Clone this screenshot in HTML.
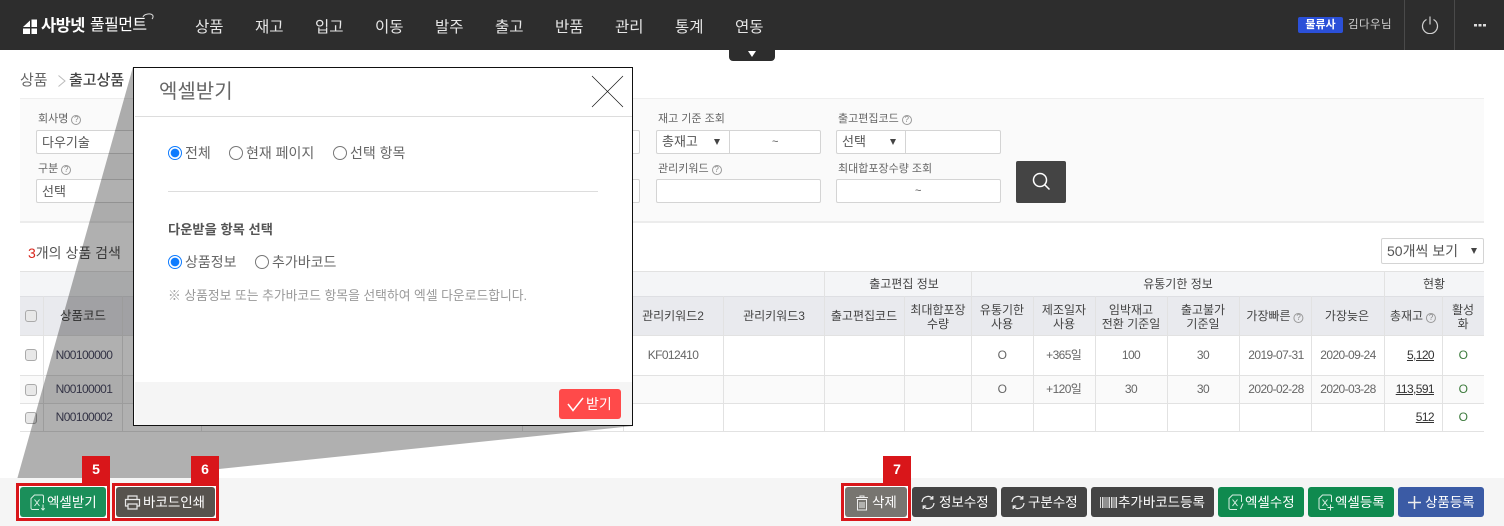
<!DOCTYPE html>
<html lang="ko"><head><meta charset="utf-8"><title>엑셀받기</title>
<style>
*{box-sizing:border-box}
html,body{margin:0;padding:0;background:#fff}
body{width:1504px;height:526px;position:relative;overflow:hidden;font-family:"Liberation Sans","Noto Sans CJK KR",sans-serif;color:#555;font-size:12px}
div,span.a,svg.a{position:absolute}
.t{white-space:nowrap;line-height:16px}
.c{white-space:nowrap;text-align:center;line-height:14px;transform:translateX(-50%)}
.m{top:18px;color:#e6e6e6;font-size:15.500px;line-height:20px;white-space:nowrap}
.lb{font-size:11px;color:#666;line-height:14px;white-space:nowrap}
.in{background:#fff;border:1px solid #d4d4d4;border-radius:2px;height:24px}
.q{display:inline-block;width:10px;height:10px;border:1px solid #999;border-radius:50%;font-size:8px;line-height:8px;text-align:center;color:#888;margin-left:3px;vertical-align:0}
.hl{left:20px;width:1464px;height:1px;background:#e2e2e2}
.vl{width:1px;background:#e2e2e2}
.h{font-size:12px;color:#444}
.d{font-size:12px;color:#666;letter-spacing:-.6px}
.k{font-size:12px;letter-spacing:0}
.r{width:14px;height:14px;border-radius:50%;border:1px solid #777;background:#fff}
.r.on{border:1.500px solid #0d7bff;background:radial-gradient(circle,#0d7bff 0 4px,#fff 4.600px)}
.cb{width:12px;height:12px;background:#e8e8e8;border:1px solid #aaa;border-radius:3px;left:25px}
.b{top:487px;height:30px;border-radius:3px;color:#fff;font-size:13.500px;line-height:30px;white-space:nowrap}
.b span{position:absolute;top:0;line-height:31px}
.red{border:3px solid #d9161a;box-shadow:inset 0 0 0 1px #fff;top:483px;height:38px}
.bd{top:456px;width:28px;height:28px;background:#d9161a;color:#fff;font-weight:700;font-size:14px;line-height:27px;text-align:center}
.rt{font-size:14px;color:#666}
</style></head><body>

<!-- top bar -->
<div style="left:0;top:0;width:1504px;height:50px;background:#2d2d2d"></div>
<svg class="a" style="left:22px;top:18px" width="20" height="17" viewBox="0 0 20 17"><path d="M1 9 8 2.500V9zM9.500 1.500H15V9H9.500zM1 10.500h7V16H1zM9.500 10.500H15V16H9.500z" fill="#fff"/></svg>
<div class="t" style="left:41px;top:15px;color:#fff;font-size:16.500px;font-weight:700;line-height:22px;letter-spacing:-.6px">사방넷</div>
<div class="t" style="left:90px;top:15px;color:#fff;font-size:16px;line-height:22px;letter-spacing:-.6px">풀필먼트</div>
<svg class="a" style="left:142px;top:13px" width="12" height="9" viewBox="0 0 12 9"><path d="M1 4C2 1 8 0 10.500 2 11.500 3 11 5 10 6" fill="none" stroke="#ddd"/></svg>
<div class="m" style="left:195px">상품</div><div class="m" style="left:255px">재고</div><div class="m" style="left:315px">입고</div><div class="m" style="left:375px">이동</div><div class="m" style="left:435px">발주</div><div class="m" style="left:495px">출고</div><div class="m" style="left:555px">반품</div><div class="m" style="left:615px">관리</div><div class="m" style="left:675px">통계</div><div class="m" style="left:735px">연동</div>
<div style="left:729px;top:50px;width:46px;height:11px;background:#2d2d2d;border-radius:0 0 4px 4px"></div>
<div style="left:748px;top:51px;width:0;height:0;border-left:4.500px solid transparent;border-right:4.500px solid transparent;border-top:6px solid #fff"></div>
<div style="left:1298px;top:17px;width:45px;height:16px;background:#2b50d8;border-radius:2px;color:#fff;font-size:11px;line-height:16px;text-align:center;font-weight:700">물류사</div>
<div class="t" style="left:1348px;top:17px;color:#cfcfcf;font-size:11.500px;letter-spacing:.4px">김다우님</div>
<div class="vl" style="left:1404px;top:0;height:50px;background:#4a4a4a"></div>
<div class="vl" style="left:1454px;top:0;height:50px;background:#4a4a4a"></div>
<svg class="a" style="left:1421px;top:16px" width="18" height="18" viewBox="0 0 18 18"><path d="M5.500 3.500a7.500 7.500 0 1 0 7 0M9 .5v8" fill="none" stroke="#cfcfcf" stroke-width="1.200"/></svg>
<svg class="a" style="left:1473px;top:23px" width="14" height="4" viewBox="0 0 14 4"><path d="M1 1h3v2.500H1zM5.500 1h3v2.500h-3zM10 1h3v2.500h-3z" fill="#ddd"/></svg>

<!-- breadcrumb -->
<div class="t" style="left:20px;top:72px;font-size:15px;line-height:18px;color:#666">상품</div>
<svg class="a" style="left:57px;top:74px" width="10" height="14" viewBox="0 0 10 14"><path d="M1.500 1.500 8 7l-6.500 5.500" fill="none" stroke="#bbb"/></svg>
<div class="t" style="left:69px;top:72px;font-size:15px;line-height:18px;color:#444;font-weight:500">출고상품</div>

<!-- filter -->
<div style="left:20px;top:98px;width:1464px;height:125px;background:#fafafa;border-top:1px solid #eee;border-bottom:2px solid #ececec"></div>
<div class="lb" style="left:38px;top:112px">회사명<span class="q">?</span></div>
<div class="in" style="left:36px;top:130px;width:110px;padding:4px 5px;font-size:13px;color:#555;line-height:16px">다우기술</div>
<div class="lb" style="left:38px;top:162px">구분<span class="q">?</span></div>
<div class="in" style="left:36px;top:179px;width:110px;padding:4px 5px;font-size:13px;color:#555;line-height:16px">선택</div>
<div class="in" style="left:600px;top:130px;width:40px"></div>
<div class="in" style="left:600px;top:179px;width:40px"></div>

<div class="lb" style="left:658px;top:112px">재고 기준 조회</div>
<div class="in" style="left:656px;top:130px;width:165px"></div>
<div class="vl" style="left:729px;top:130px;height:24px;background:#d4d4d4"></div>
<div class="t" style="left:662px;top:134px;font-size:13px;color:#555">총재고</div>
<div style="left:714px;top:139px;border-left:3.500px solid transparent;border-right:3.500px solid transparent;border-top:6px solid #444"></div>
<div class="t" style="left:772px;top:134px;font-size:11px">~</div>

<div class="lb" style="left:838px;top:112px">출고편집코드<span class="q">?</span></div>
<div class="in" style="left:836px;top:130px;width:165px"></div>
<div class="vl" style="left:905px;top:130px;height:24px;background:#d4d4d4"></div>
<div class="t" style="left:842px;top:134px;font-size:13px;color:#555">선택</div>
<div style="left:890px;top:139px;border-left:3.500px solid transparent;border-right:3.500px solid transparent;border-top:6px solid #444"></div>

<div class="lb" style="left:658px;top:162px">관리키워드<span class="q">?</span></div>
<div class="in" style="left:656px;top:179px;width:165px"></div>
<div class="lb" style="left:838px;top:162px">최대합포장수량 조회</div>
<div class="in" style="left:836px;top:179px;width:165px"></div>
<div class="t" style="left:915px;top:183px;font-size:11px">~</div>
<div style="left:1016px;top:161px;width:50px;height:42px;background:#444;border-radius:2px"></div>
<svg class="a" style="left:1032px;top:172px" width="19" height="19" viewBox="0 0 19 19"><circle cx="8" cy="8" r="6.500" fill="none" stroke="#fff" stroke-width="1.500"/><path d="m12.800 12.800 4.700 4.700" stroke="#fff" stroke-width="1.500"/></svg>

<!-- search result -->
<div class="t" style="left:28px;top:245px;font-size:14px;color:#555"><span style="color:#d9261c">3</span>개의 상품 검색</div>
<div class="in" style="left:1381px;top:238px;width:103px;height:26px;padding:4px 5px;font-size:14px;color:#555;line-height:16px">50개씩 보기</div>
<div style="left:1471px;top:248px;border-left:3px solid transparent;border-right:3px solid transparent;border-top:6px solid #444"></div>

<!-- table -->
<div style="left:20px;top:271px;width:1464px;height:25px;background:#f4f5f7"></div>
<div style="left:20px;top:296px;width:1464px;height:39px;background:#e9eaee"></div>
<div style="left:20px;top:375px;width:1464px;height:28px;background:#fafafa"></div>
<div class="hl" style="top:271px"></div><div class="hl" style="top:296px;background:#dedfe3"></div><div class="hl" style="top:335px"></div><div class="hl" style="top:375px"></div><div class="hl" style="top:403px"></div><div class="hl" style="top:431px"></div>
<div class="vl" style="left:43px;top:296px;height:135px"></div>
<div class="vl" style="left:122px;top:296px;height:135px"></div>
<div class="vl" style="left:201px;top:296px;height:135px"></div>
<div class="vl" style="left:522px;top:296px;height:135px"></div>
<div class="vl" style="left:623px;top:296px;height:135px"></div>
<div class="vl" style="left:723px;top:296px;height:135px"></div>
<div class="vl" style="left:824px;top:271px;height:160px"></div>
<div class="vl" style="left:904px;top:296px;height:135px"></div>
<div class="vl" style="left:971px;top:271px;height:160px"></div>
<div class="vl" style="left:1033px;top:296px;height:135px"></div>
<div class="vl" style="left:1095px;top:296px;height:135px"></div>
<div class="vl" style="left:1167px;top:296px;height:135px"></div>
<div class="vl" style="left:1239px;top:296px;height:135px"></div>
<div class="vl" style="left:1311px;top:296px;height:135px"></div>
<div class="vl" style="left:1384px;top:271px;height:160px"></div>
<div class="vl" style="left:1442px;top:296px;height:135px"></div>

<div class="c h" style="left:904px;top:277px">출고편집 정보</div>
<div class="c h" style="left:1178px;top:277px">유통기한 정보</div>
<div class="c h" style="left:1434px;top:277px">현황</div>

<div class="cb" style="top:310px"></div>
<div class="c h" style="left:83px;top:309px;font-size:12.500px">상품코드</div>
<div class="c h" style="left:673px;top:309px">관리키워드2</div>
<div class="c h" style="left:774px;top:309px">관리키워드3</div>
<div class="c h" style="left:864px;top:309px">출고편집코드</div>
<div class="c h" style="left:938px;top:303px">최대합포장<br>수량</div>
<div class="c h" style="left:1002px;top:303px">유통기한<br>사용</div>
<div class="c h" style="left:1064px;top:303px">제조일자<br>사용</div>
<div class="c h" style="left:1131px;top:303px">임박재고<br>전환 기준일</div>
<div class="c h" style="left:1203px;top:303px">출고불가<br>기준일</div>
<div class="c h" style="left:1275px;top:309px">가장빠른<span class="q">?</span></div>
<div class="c h" style="left:1347px;top:309px">가장늦은</div>
<div class="c h" style="left:1413px;top:309px">총재고<span class="q">?</span></div>
<div class="c h" style="left:1463px;top:303px">활성<br>화</div>

<div class="cb" style="top:349px"></div>
<div class="c d" style="left:84px;top:348px;color:#4c4c66">N00100000</div>
<div class="c d" style="left:673px;top:348px">KF012410</div>
<div class="c d" style="left:1002px;top:348px">O</div>
<div class="c d" style="left:1064px;top:348px">+365<span class="k">일</span></div>
<div class="c d" style="left:1131px;top:348px">100</div>
<div class="c d" style="left:1203px;top:348px">30</div>
<div class="c d" style="left:1276px;top:348px">2019-07-31</div>
<div class="c d" style="left:1348px;top:348px">2020-09-24</div>
<div class="t d" style="right:70px;top:347px;color:#333;text-decoration:underline">5,120</div>
<div class="c d" style="left:1463px;top:348px;color:#3c7a3c">O</div>

<div class="cb" style="top:384px"></div>
<div class="c d" style="left:84px;top:382px;color:#4c4c66">N00100001</div>
<div class="c d" style="left:1002px;top:382px">O</div>
<div class="c d" style="left:1064px;top:382px">+120<span class="k">일</span></div>
<div class="c d" style="left:1131px;top:382px">30</div>
<div class="c d" style="left:1203px;top:382px">30</div>
<div class="c d" style="left:1276px;top:382px">2020-02-28</div>
<div class="c d" style="left:1348px;top:382px">2020-03-28</div>
<div class="t d" style="right:70px;top:381px;color:#333;text-decoration:underline">113,591</div>
<div class="c d" style="left:1463px;top:382px;color:#3c7a3c">O</div>

<div class="cb" style="top:412px"></div>
<div class="c d" style="left:84px;top:410px;color:#4c4c66">N00100002</div>
<div class="t d" style="right:70px;top:409px;color:#333;text-decoration:underline">512</div>
<div class="c d" style="left:1463px;top:410px;color:#3c7a3c">O</div>

<!-- annotation wedge -->
<svg class="a" style="left:0;top:0" width="1504" height="526" viewBox="0 0 1504 526"><polygon points="133,67 16,483 219,483 219,469 633,426" fill="#000" fill-opacity=".31"/></svg>

<!-- footer -->
<div style="left:0;top:478px;width:1504px;height:48px;background:#f5f5f5"></div>

<div class="b" style="left:20px;width:86px;background:#1b8f5a"><span style="left:27px">엑셀받기</span></div>
<svg class="a" style="left:30px;top:494px" width="16" height="17" viewBox="0 0 16 17"><path d="M11 1H4.500L1 4.500v9.500a1.500 1.500 0 0 0 1.500 1.500H9M11 1h1A1.500 1.500 0 0 1 13.500 2.500V9M4.500 5.500l5 6.500M9.500 5.500l-5 6.500M13 10.500v5.500M11.300 14.300 13 16l1.700-1.700" fill="none" stroke="#d8efe3"/></svg>
<div class="b" style="left:116px;width:99px;background:#57534e"><span style="left:27px">바코드인쇄</span></div>
<svg class="a" style="left:124px;top:495px" width="17" height="15" viewBox="0 0 17 15"><path d="M4 4V1h9v3M4 11H1.500V4.500h14V11H13M4 9h9v5H4z" fill="none" stroke="#e8e8e8" stroke-width="1.200"/></svg>
<div class="red" style="left:16px;width:94px"></div>
<div class="red" style="left:112px;width:107px"></div>
<div class="bd" style="left:82px">5</div>
<div class="bd" style="left:191px">6</div>

<div class="b" style="left:845px;width:62px;background:#777570"><span style="left:27px">삭제</span></div>
<svg class="a" style="left:855px;top:495px" width="14" height="16" viewBox="0 0 14 16"><path d="M1 2.500h12M5 2.500V1h4v1.500M2.500 4.500h9V15h-9zM5 7v6M7 7v6M9 7v6" fill="none" stroke="#eee"/></svg>
<div class="red" style="left:841px;width:70px"></div>
<div class="bd" style="left:883px">7</div>

<div class="b" style="left:912px;width:85px;background:#444"><span style="left:27px">정보수정</span></div>
<svg class="a" style="left:921px;top:495px" width="14" height="15" viewBox="0 0 14 15"><path d="M1 7a6 6 0 0 1 10.500-3.500M13 8a6 6 0 0 1-10.500 3.500M11.800 1v3h-3M2.200 14v-3h3" fill="none" stroke="#eee" stroke-width="1.200"/></svg>
<div class="b" style="left:1001px;width:86px;background:#444"><span style="left:27px">구분수정</span></div>
<svg class="a" style="left:1011px;top:495px" width="14" height="15" viewBox="0 0 14 15"><path d="M1 7a6 6 0 0 1 10.500-3.500M13 8a6 6 0 0 1-10.500 3.500M11.800 1v3h-3M2.200 14v-3h3" fill="none" stroke="#eee" stroke-width="1.200"/></svg>
<div class="b" style="left:1091px;width:123px;background:#444"><span style="left:27px">추가바코드등록</span></div>
<svg class="a" style="left:1100px;top:497px" width="17" height="11" viewBox="0 0 17 11"><path d="M.5 0v11M2.500 0v11M4 0v11M6 0v11M8 0v11M9.500 0v11M11.500 0v11M13 0v11M15 0v11M16.500 0v11" stroke="#ddd"/></svg>
<div class="b" style="left:1218px;width:86px;background:#0f8a4f"><span style="left:27px">엑셀수정</span></div>
<svg class="a" style="left:1228px;top:494px" width="16" height="17" viewBox="0 0 16 17"><path d="M11 1H4.500L1 4.500v9.500a1.500 1.500 0 0 0 1.500 1.500H9M11 1h1A1.500 1.500 0 0 1 13.500 2.500V8M4.500 5.500l5 6.500M9.500 5.500l-5 6.500M15 9.500 12.500 15" fill="none" stroke="#d8efe3"/></svg>
<div class="b" style="left:1308px;width:86px;background:#0f8a4f"><span style="left:27px">엑셀등록</span></div>
<svg class="a" style="left:1318px;top:494px" width="16" height="17" viewBox="0 0 16 17"><path d="M11 1H4.500L1 4.500v9.500a1.500 1.500 0 0 0 1.500 1.500H8M11 1h1A1.500 1.500 0 0 1 13.500 2.500V8M4.500 5.500l5 6.500M9.500 5.500l-5 6.500M12.500 10.500v6M9.500 13.500h6" fill="none" stroke="#d8efe3"/></svg>
<div class="b" style="left:1398px;width:86px;background:#3b5ba5"><span style="left:27px">상품등록</span></div>
<svg class="a" style="left:1408px;top:496px" width="13" height="13" viewBox="0 0 13 13"><path d="M6.500 0v13M0 6.500h13" stroke="#eee" stroke-width="1.500"/></svg>

<!-- modal -->
<div style="left:133px;top:67px;width:500px;height:359px;background:#fff;border:1.500px solid #111"></div>
<div class="t" style="left:159px;top:79px;font-size:20px;line-height:26px;color:#666">엑셀받기</div>
<div style="left:135px;top:116px;width:497px;height:1px;background:#ddd"></div>
<svg class="a" style="left:591px;top:75px" width="33" height="33" viewBox="0 0 33 33"><path d="M1 1l31 31M32 1 1 32" stroke="#111" stroke-width=".7" fill="none"/></svg>

<div class="r on" style="left:168px;top:146px"></div>
<div class="t rt" style="left:185px;top:145px">전체</div>
<div class="r" style="left:229px;top:146px"></div>
<div class="t rt" style="left:246px;top:145px">현재 페이지</div>
<div class="r" style="left:333px;top:146px"></div>
<div class="t rt" style="left:350px;top:145px">선택 항목</div>
<div style="left:168px;top:191px;width:430px;height:1px;background:#ddd"></div>
<div class="t" style="left:168px;top:222px;font-size:13.250px;font-weight:700;color:#555">다운받을 항목 선택</div>
<div class="r on" style="left:168px;top:255px"></div>
<div class="t rt" style="left:185px;top:254px">상품정보</div>
<div class="r" style="left:255px;top:255px"></div>
<div class="t rt" style="left:272px;top:254px">추가바코드</div>
<div class="t" style="left:168px;top:288px;font-size:12.800px;color:#999">※ 상품정보 또는 추가바코드 항목을 선택하여 엑셀 다운로드합니다.</div>
<div style="left:135px;top:382px;width:497px;height:43px;background:#f5f5f5"></div>
<div style="left:559px;top:389px;width:62px;height:30px;background:#ff4a4a;border-radius:3px;color:#fff;font-size:14px;line-height:30px;padding-left:27px">받기</div>
<svg class="a" style="left:567px;top:397px" width="17" height="15" viewBox="0 0 17 15"><path d="M1 7l5 6.500L16 1" fill="none" stroke="#fff" stroke-width="1.500"/></svg>
</body></html>
